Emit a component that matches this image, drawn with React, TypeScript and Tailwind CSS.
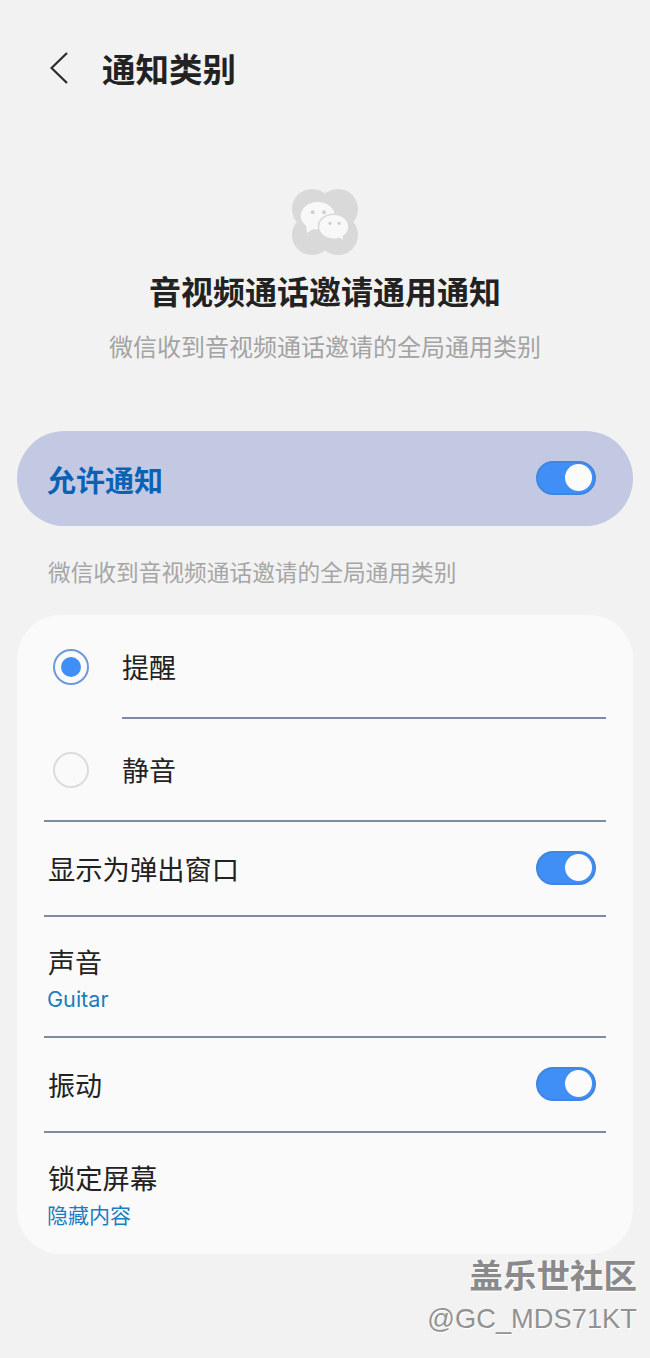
import React from 'react';

const Toggle: React.FC = () => (
  <div className="mb-[2px] flex h-[34px] w-[60px] items-center justify-end rounded-full border-2 border-[#3f86e0] bg-[#3f8ff7] pr-[2px]">
    <div className="h-[27px] w-[27px] rounded-full bg-[#fbfbfb]" />
  </div>
);

const Divider: React.FC<{ inset?: boolean }> = ({ inset }) => (
  <div className={inset ? 'ml-[105px] mr-[27px] h-[2px] bg-[#7c8aa6]' : 'ml-[27px] mr-[27px] h-[2px] bg-[#7c8aa6]'} />
);

const WeChatIcon: React.FC = () => (
  <svg width="66" height="66" viewBox="0 0 66 66" className="mt-[84px] self-center">
    <g fill="#d9d9d9">
      <circle cx="20" cy="20" r="20" />
      <circle cx="46" cy="20" r="20" />
      <circle cx="20" cy="46" r="20" />
      <circle cx="46" cy="46" r="20" />
    </g>
    <path d="M14 36l1 8 8-5z" fill="#f8f8f8" />
    <ellipse cx="25.7" cy="26.7" rx="17" ry="13.7" fill="#f8f8f8" />
    <ellipse cx="41.7" cy="37.7" rx="16" ry="13.2" fill="#d9d9d9" />
    <path d="M44 46l7 5-1-8z" fill="#f8f8f8" />
    <ellipse cx="41.7" cy="37.7" rx="14.5" ry="11.7" fill="#f8f8f8" />
    <g fill="#cfcfcf">
      <circle cx="20.7" cy="23.3" r="2" />
      <circle cx="32" cy="23.3" r="2" />
      <circle cx="38" cy="34.3" r="1.6" />
      <circle cx="47" cy="34.3" r="1.6" />
    </g>
  </svg>
);

export default function App() {
  return (
    <div className="relative flex h-[1358px] w-[650px] flex-col overflow-hidden bg-[#f2f2f2] font-['Noto_Sans_CJK_SC',sans-serif] text-[#222222]">
      {/* Header */}
      <div className="mt-[35px] flex h-[70px] items-center">
        <svg width="18" height="32" viewBox="0 0 18 32" fill="none" className="mb-[5px] ml-[50px]">
          <path d="M17 1L1.5 16 17 31" stroke="#2a2a2a" strokeWidth="2.2" />
        </svg>
        <h1 className="mb-[4px] ml-[34px] text-[33.5px] leading-[44px] font-bold">通知类别</h1>
      </div>

      <WeChatIcon />
      <h2 className="mt-[13px] text-center text-[32px] leading-[44px] font-bold">音视频通话邀请通用通知</h2>
      <p className="mt-[16px] text-center text-[24px] leading-[36px] text-[#a3a3a3]">微信收到音视频通话邀请的全局通用类别</p>

      {/* Master switch */}
      <div className="mx-[17px] mt-[67px] flex h-[95px] items-center justify-between rounded-full bg-[#c3c9e3] pr-[37px] pl-[30px]">
        <span className="mt-[2px] text-[29px] font-bold text-[#0b62b3]">允许通知</span>
        <Toggle />
      </div>

      <p className="mt-[30px] ml-[48px] text-[22.7px] leading-[32px] text-[#a6a6a6]">微信收到音视频通话邀请的全局通用类别</p>

      {/* Settings card */}
      <div className="mx-[17px] mt-[27px] flex h-[639px] flex-col rounded-[44px] bg-[#fafafa]">
        <div className="flex h-[102px] items-center pt-[2px]">
          <div className="ml-[36px] flex h-[36px] w-[36px] items-center justify-center rounded-full border-2 border-[#6f9ad6]">
            <div className="h-[20px] w-[20px] rounded-full bg-[#3f8ff7]" />
          </div>
          <span className="ml-[33px] text-[27px]">提醒</span>
        </div>
        <Divider inset />
        <div className="flex h-[101px] items-center pt-[1px]">
          <div className="ml-[36px] h-[36px] w-[36px] rounded-full border-2 border-[#dcdcdc]" />
          <span className="ml-[33px] text-[27px]">静音</span>
        </div>
        <Divider />
        <div className="flex h-[93px] items-center justify-between pr-[37px] pl-[31px]">
          <span className="text-[27.3px]">显示为弹出窗口</span>
          <Toggle />
        </div>
        <Divider />
        <div className="flex h-[119px] flex-col justify-center pt-[4px] pl-[31px]">
          <span className="text-[27px] leading-[38px]">声音</span>
          <span className="mt-[3px] -ml-[1px] font-['Inter',sans-serif] text-[21.6px] leading-[30px] text-[#1b7dc0]">Guitar</span>
        </div>
        <Divider />
        <div className="flex h-[93px] items-center justify-between pr-[37px] pl-[31px]">
          <span className="mt-[2px] text-[27px]">振动</span>
          <Toggle />
        </div>
        <Divider />
        <div className="flex flex-1 flex-col justify-center pb-[1px] pl-[31px]">
          <span className="text-[27.3px] leading-[38px]">锁定屏幕</span>
          <span className="mt-[3px] -ml-[1px] text-[21px] leading-[30px] text-[#1b7dc0]">隐藏内容</span>
        </div>
      </div>

      {/* Watermark */}
      <div className="absolute top-[1252px] right-[13px] flex flex-col items-end text-[#8a8a8a] [text-shadow:1px_1px_0_#ffffff]">
        <span className="text-[33.5px] leading-[44px] font-bold">盖乐世社区</span>
        <span className="font-['Liberation_Sans',sans-serif] text-[27.3px] leading-[46px] text-[#929292]">@GC_MDS71KT</span>
      </div>
    </div>
  );
}
